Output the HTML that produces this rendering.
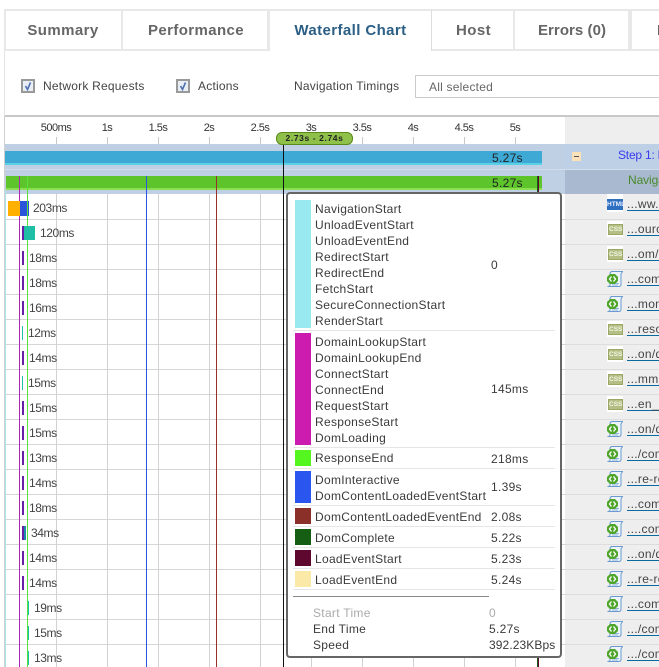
<!DOCTYPE html>
<html><head><meta charset="utf-8">
<style>
html,body{margin:0;padding:0;background:#fff}
#p{position:relative;width:659px;height:667px;overflow:hidden;background:#fff;font-family:"Liberation Sans",sans-serif;font-size:12px;color:#333}
#p div,#p a,#p svg{position:absolute}
.t{white-space:nowrap;line-height:16px;letter-spacing:.3px;color:#3a3a3a}
.o{letter-spacing:.22px}
.tab{top:9px;height:40px;box-sizing:border-box;border:solid #e8e8e8;border-width:2px 2px 0 0;font-weight:bold;font-size:15px;line-height:39px;color:#666;text-align:center;letter-spacing:.4px;white-space:nowrap}
.cb{width:10px;height:10px;border:2px solid #999;background:#e8eef5}
.tk{top:137px;width:1px;height:7px;background:#c8c8c8}
.sc{top:120px;width:50px;text-align:center;font-size:11px;letter-spacing:-.5px;line-height:16px;color:#333}
.r{white-space:nowrap;line-height:16px;font-size:12px;letter-spacing:-.4px;color:#444}
.b{width:2px;height:14px;background:#6a1fa8}
.g{width:1px;height:14px;background:#1fbfa5}
.h{width:1px;height:14px;background:#14c4a4}
.l{left:627px;white-space:nowrap;line-height:11px;font-size:12px;letter-spacing:.3px;color:#444;border-bottom:1px solid #0a6aa0;height:11px;width:40px}
.c{left:607px;width:16px;height:16px;background:#fff}
.c div{left:1px;top:3px;width:15px;height:11px;background:#b5bf85;border:1px solid #9aa866;box-sizing:border-box;color:#f2f4e4;font:bold 6.5px/9px "Liberation Sans",sans-serif;text-align:center}
.j{left:607px;width:16px;height:17px}
.s{left:293px;width:262px;height:1px;background:#e6e6e6}
.w{left:295px;width:16px}
</style></head>
<body><div id="p">

<!-- tabs -->
<div style="left:4px;top:49px;width:655px;height:2px;background:#e8e8e8"></div>
<div style="left:4px;top:9px;width:2px;height:41px;background:#e8e8e8"></div>
<div class="tab" style="left:5px;width:118px">Summary</div>
<div class="tab" style="left:123px;width:146px;padding-left:2px">Performance</div>
<div class="tab" style="left:269px;width:163px;height:42px;color:#2c5f85;background:#fff;border-left:1px solid #e8e8e8;border-right:1px solid #ddd">Waterfall Chart</div>
<div class="tab" style="left:432px;width:83px;padding-left:2px">Host</div>
<div class="tab" style="left:515px;width:115px;padding-left:1px;letter-spacing:.05px">Errors (0)</div>
<div class="tab" style="left:630px;width:60px;text-align:left;padding-left:25px;border-left:2px solid #e8e8e8">R</div>

<!-- options -->
<div style="left:4px;top:50px;width:1px;height:66px;background:#e4e4e4"></div>
<div class="cb" style="left:21px;top:79px"></div>
<svg style="left:21px;top:79px" width="14" height="14"><path d="M4.500 7l2 3.500 3-7" fill="none" stroke="#4f6fb0" stroke-width="1.600"/></svg>
<div class="t o" style="left:43px;top:78px;color:#444">Network Requests</div>
<div class="cb" style="left:176px;top:79px"></div>
<svg style="left:176px;top:79px" width="14" height="14"><path d="M4.500 7l2 3.500 3-7" fill="none" stroke="#4f6fb0" stroke-width="1.600"/></svg>
<div class="t o" style="left:198px;top:78px;color:#444">Actions</div>
<div class="t o" style="left:294px;top:78px;color:#444">Navigation Timings</div>
<div style="left:415px;top:75px;width:260px;height:21px;border:1px solid #ccc;background:#fff"></div>
<div class="t o" style="left:429px;top:79px;color:#666">All selected</div>

<!-- timeline header -->
<div style="left:5px;top:115px;width:654px;height:2px;background:#c8c8c8"></div>
<div style="left:4px;top:116px;width:1px;height:551px;background:#d0d0d0"></div>
<div style="left:565px;top:117px;width:94px;height:27px;background:#eee"></div>
<div class="sc" style="left:31px">500ms</div>
<div class="sc" style="left:82px">1s</div>
<div class="sc" style="left:133px">1.5s</div>
<div class="sc" style="left:184px">2s</div>
<div class="sc" style="left:235px">2.5s</div>
<div class="sc" style="left:286px">3s</div>
<div class="sc" style="left:337px">3.5s</div>
<div class="sc" style="left:388px">4s</div>
<div class="sc" style="left:439px">4.5s</div>
<div class="sc" style="left:490px">5s</div>
<div class="tk" style="left:56px"></div><div class="tk" style="left:107px"></div><div class="tk" style="left:158px"></div><div class="tk" style="left:209px"></div><div class="tk" style="left:260px"></div><div class="tk" style="left:311px"></div><div class="tk" style="left:362px"></div><div class="tk" style="left:413px"></div><div class="tk" style="left:464px"></div><div class="tk" style="left:515px"></div>

<!-- band -->
<div style="left:5px;top:144px;width:560px;height:50px;background:#bfd0e5"></div>
<div style="left:5px;top:169px;width:560px;height:1px;background:#d2deec"></div>
<div style="left:565px;top:144px;width:94px;height:25px;background:#bdd0e5"></div>
<div style="left:565px;top:169px;width:94px;height:1px;background:#d2deec"></div>
<div style="left:565px;top:170px;width:94px;height:24px;background:#a9b9cf"></div>
<div style="left:572px;top:152px;width:9px;height:9px;background:#fbe0b8"></div>
<div style="left:574px;top:156px;width:5px;height:1px;background:#456"></div>
<div class="t" style="left:618px;top:147px;color:#3a3af0;letter-spacing:-.2px">Step 1: http</div>
<div class="t" style="left:628px;top:172px;color:#4a8a2a;letter-spacing:-.1px">Navigation</div>

<div style="left:5px;top:151px;width:537px;height:14px;background:#3fa9d5"></div>
<div style="left:5px;top:163px;width:537px;height:2px;background:#5ad0e6"></div>
<div style="left:6px;top:176px;width:536px;height:14px;background:#5dc42c"></div>
<div style="left:6px;top:188px;width:536px;height:2px;background:#8ae050"></div>
<div class="t" style="left:492px;top:150px;color:#222">5.27s</div>
<div class="t" style="left:492px;top:175px;color:#222">5.27s</div>

<!-- grid -->
<div style="left:5px;top:194px;width:560px;height:473px;background:#fff"></div>
<div style="left:5px;top:219px;width:560px;height:448px;background:repeating-linear-gradient(to bottom,#d6d6d6 0 1px,transparent 1px 25px)"></div>
<div style="left:56px;top:194px;width:460px;height:473px;background:repeating-linear-gradient(to right,#d2d2d2 0 1px,transparent 1px 51px)"></div>
<div style="left:565px;top:194px;width:94px;height:473px;background:#eee"></div>
<div style="left:565px;top:219px;width:94px;height:448px;background:repeating-linear-gradient(to bottom,#ddd 0 1px,transparent 1px 25px)"></div>

<!-- vertical markers -->
<div style="left:5px;top:190px;width:1px;height:477px;background:#a8e6ea"></div>
<div style="left:19px;top:176px;width:1px;height:491px;background:#a828b0"></div>
<div style="left:27px;top:176px;width:1px;height:491px;background:#5ae03a"></div>
<div style="left:146px;top:176px;width:1px;height:491px;background:#2a55e0"></div>
<div style="left:216px;top:176px;width:1px;height:491px;background:#99302a"></div>
<div style="left:537px;top:176px;width:1px;height:491px;background:#1a5a1a"></div>
<div style="left:538px;top:176px;width:1px;height:491px;background:#600a2a"></div>
<div style="left:283px;top:144px;width:1px;height:523px;background:#111"></div>

<!-- pill -->
<div style="left:276px;top:132px;width:75px;height:11px;border:1px solid #5a8a1a;border-radius:6px;background:#8fc04a;font:bold 8.5px/11px 'Liberation Sans',sans-serif;letter-spacing:.6px;text-align:center;color:#222;white-space:nowrap">2.73s - 2.74s</div>

<!-- rows bars -->
<div style="left:8px;top:201px;width:12px;height:15px;background:#ffb000"></div>
<div style="left:20px;top:201px;width:7px;height:15px;background:#2a55d8"></div>
<div style="left:28px;top:201px;width:1px;height:15px;background:#2a55d8"></div>
<div class="r" style="left:33px;top:200px">203ms</div>
<div class="b" style="left:22px;top:226px"></div>
<div style="left:24px;top:226px;width:11px;height:14px;background:#1fbfa5"></div>
<div class="r" style="left:40px;top:225px">120ms</div>
<div class="b" style="left:22px;top:251px"></div><div class="r" style="left:29px;top:250px">18ms</div>
<div class="b" style="left:22px;top:276px"></div><div class="r" style="left:29px;top:275px">18ms</div>
<div class="b" style="left:22px;top:301px"></div><div class="r" style="left:29px;top:300px">16ms</div>
<div class="g" style="left:22px;top:326px"></div><div class="r" style="left:28px;top:325px">12ms</div>
<div class="b" style="left:22px;top:351px"></div><div class="r" style="left:29px;top:350px">14ms</div>
<div class="g" style="left:22px;top:376px"></div><div class="r" style="left:28px;top:375px">15ms</div>
<div class="b" style="left:22px;top:401px"></div><div class="r" style="left:29px;top:400px">15ms</div>
<div class="b" style="left:22px;top:426px"></div><div class="r" style="left:29px;top:425px">15ms</div>
<div class="b" style="left:22px;top:451px"></div><div class="r" style="left:29px;top:450px">13ms</div>
<div class="b" style="left:22px;top:476px"></div><div class="r" style="left:29px;top:475px">14ms</div>
<div class="b" style="left:22px;top:501px"></div><div class="r" style="left:29px;top:500px">18ms</div>
<div class="b" style="left:22px;top:526px"></div><div style="left:24px;top:526px;width:2px;height:14px;background:#1a8fa5"></div><div class="r" style="left:31px;top:525px">34ms</div>
<div class="b" style="left:22px;top:551px"></div><div class="r" style="left:29px;top:550px">14ms</div>
<div class="b" style="left:22px;top:576px"></div><div class="r" style="left:29px;top:575px">14ms</div>
<div class="h" style="left:28px;top:601px"></div><div class="r" style="left:34px;top:600px">19ms</div>
<div class="h" style="left:28px;top:626px"></div><div class="r" style="left:34px;top:625px">15ms</div>
<div class="h" style="left:28px;top:651px"></div><div class="r" style="left:34px;top:650px">13ms</div>

<!-- right icons and links -->
<svg width="0" height="0" style="left:0;top:0"><defs><symbol id="js" viewBox="0 0 16 17"><path d="M4.500 .5H15.500L14 3V13.500C14 15 13 15.500 11.500 15.500H.5C2 15.500 3 15 3 14V3C3 2 3.500 1 4.500 .5Z" fill="#eef4fb" stroke="#6b9ad0"/><path d="M5 12.500h7M5 14h6" stroke="#8fb4de" fill="none"/><path d="M3 3h5l3 3v4l-3 3H3L0 10V6z" fill="#4ea52a"/><path d="M4.500 5.500L2.500 8l2 2.500M6.500 5.500L8.500 8l-2 2.500" fill="none" stroke="#fff" stroke-width="1.300"/></symbol></defs></svg>

<div style="left:607px;top:194px;width:16px;height:18px;background:#fff"></div>
<div style="left:607px;top:199px;width:16px;height:11px;background:#2f6fc0;color:#e8f0ff;font:bold 6.5px/11px 'Liberation Sans',sans-serif;text-align:center">HTML</div>
<div class="l" style="top:199px">...ww.c</div>
<div class="c" style="top:221px"><div>CSS</div></div><div class="l" style="top:224px">...ourc</div>
<div class="c" style="top:246px"><div>CSS</div></div><div class="l" style="top:249px">...om/c</div>
<svg class="j" style="top:271px"><use href="#js"/></svg><div class="l" style="top:274px">...com</div>
<svg class="j" style="top:296px"><use href="#js"/></svg><div class="l" style="top:299px">...mon</div>
<div class="c" style="top:321px"><div>CSS</div></div><div class="l" style="top:324px">...reso</div>
<div class="c" style="top:346px"><div>CSS</div></div><div class="l" style="top:349px">...on/d</div>
<div class="c" style="top:371px"><div>CSS</div></div><div class="l" style="top:374px">...mmc</div>
<div class="c" style="top:396px"><div>CSS</div></div><div class="l" style="top:399px">...en_U</div>
<svg class="j" style="top:421px"><use href="#js"/></svg><div class="l" style="top:424px">...on/d</div>
<svg class="j" style="top:446px"><use href="#js"/></svg><div class="l" style="top:449px">.../com</div>
<svg class="j" style="top:471px"><use href="#js"/></svg><div class="l" style="top:474px">...re-re</div>
<svg class="j" style="top:496px"><use href="#js"/></svg><div class="l" style="top:499px">...com.</div>
<svg class="j" style="top:521px"><use href="#js"/></svg><div class="l" style="top:524px">....com</div>
<svg class="j" style="top:546px"><use href="#js"/></svg><div class="l" style="top:549px">...on/d</div>
<svg class="j" style="top:571px"><use href="#js"/></svg><div class="l" style="top:574px">...re-re</div>
<svg class="j" style="top:596px"><use href="#js"/></svg><div class="l" style="top:599px">...com</div>
<svg class="j" style="top:621px"><use href="#js"/></svg><div class="l" style="top:624px">.../com</div>
<svg class="j" style="top:646px"><use href="#js"/></svg><div class="l" style="top:649px">.../com</div>

<!-- tooltip -->
<div style="left:286px;top:192px;width:272px;height:462px;border:2px solid #666;border-radius:4px;background:#fff"></div>
<div class="w" style="top:200px;height:128px;background:#98e9f0"></div>
<div class="t" style="left:315px;top:201px">NavigationStart</div>
<div class="t" style="left:315px;top:217px">UnloadEventStart</div>
<div class="t" style="left:315px;top:233px">UnloadEventEnd</div>
<div class="t" style="left:315px;top:249px">RedirectStart</div>
<div class="t" style="left:315px;top:265px">RedirectEnd</div>
<div class="t" style="left:315px;top:281px">FetchStart</div>
<div class="t" style="left:315px;top:297px">SecureConnectionStart</div>
<div class="t" style="left:315px;top:313px">RenderStart</div>
<div class="t" style="left:491px;top:257px">0</div>
<div class="s" style="top:330px"></div>
<div class="w" style="top:333px;height:112px;background:#cc1cb0"></div>
<div class="t" style="left:315px;top:334px">DomainLookupStart</div>
<div class="t" style="left:315px;top:350px">DomainLookupEnd</div>
<div class="t" style="left:315px;top:366px">ConnectStart</div>
<div class="t" style="left:315px;top:382px">ConnectEnd</div>
<div class="t" style="left:315px;top:398px">RequestStart</div>
<div class="t" style="left:315px;top:414px">ResponseStart</div>
<div class="t" style="left:315px;top:430px">DomLoading</div>
<div class="t" style="left:491px;top:381px">145ms</div>
<div class="s" style="top:447px"></div>
<div class="w" style="top:450px;height:16px;background:#55f520"></div>
<div class="t" style="left:315px;top:450px">ResponseEnd</div>
<div class="t" style="left:491px;top:451px">218ms</div>
<div class="s" style="top:468px"></div>
<div class="w" style="top:471px;height:32px;background:#2a55ee"></div>
<div class="t" style="left:315px;top:472px">DomInteractive</div>
<div class="t" style="left:315px;top:488px">DomContentLoadedEventStart</div>
<div class="t" style="left:491px;top:479px">1.39s</div>
<div class="s" style="top:505px"></div>
<div class="w" style="top:508px;height:16px;background:#8a3028"></div>
<div class="t" style="left:315px;top:509px">DomContentLoadedEventEnd</div>
<div class="t" style="left:491px;top:509px">2.08s</div>
<div class="s" style="top:526px"></div>
<div class="w" style="top:529px;height:16px;background:#165e14"></div>
<div class="t" style="left:315px;top:530px">DomComplete</div>
<div class="t" style="left:491px;top:530px">5.22s</div>
<div class="s" style="top:547px"></div>
<div class="w" style="top:550px;height:16px;background:#5e0830"></div>
<div class="t" style="left:315px;top:551px">LoadEventStart</div>
<div class="t" style="left:491px;top:551px">5.23s</div>
<div class="s" style="top:568px"></div>
<div class="w" style="top:571px;height:16px;background:#fbe9a8"></div>
<div class="t" style="left:315px;top:572px">LoadEventEnd</div>
<div class="t" style="left:491px;top:572px">5.24s</div>
<div class="s" style="top:589px"></div>
<div style="left:293px;top:596px;width:196px;height:1px;background:#888"></div>
<div class="t" style="left:313px;top:605px;color:#aaa">Start Time</div>
<div class="t" style="left:489px;top:605px;color:#aaa">0</div>
<div class="t" style="left:313px;top:621px">End Time</div>
<div class="t" style="left:489px;top:621px">5.27s</div>
<div class="t" style="left:313px;top:637px">Speed</div>
<div class="t" style="left:489px;top:637px;letter-spacing:.1px">392.23KBps</div>

</div></body></html>
